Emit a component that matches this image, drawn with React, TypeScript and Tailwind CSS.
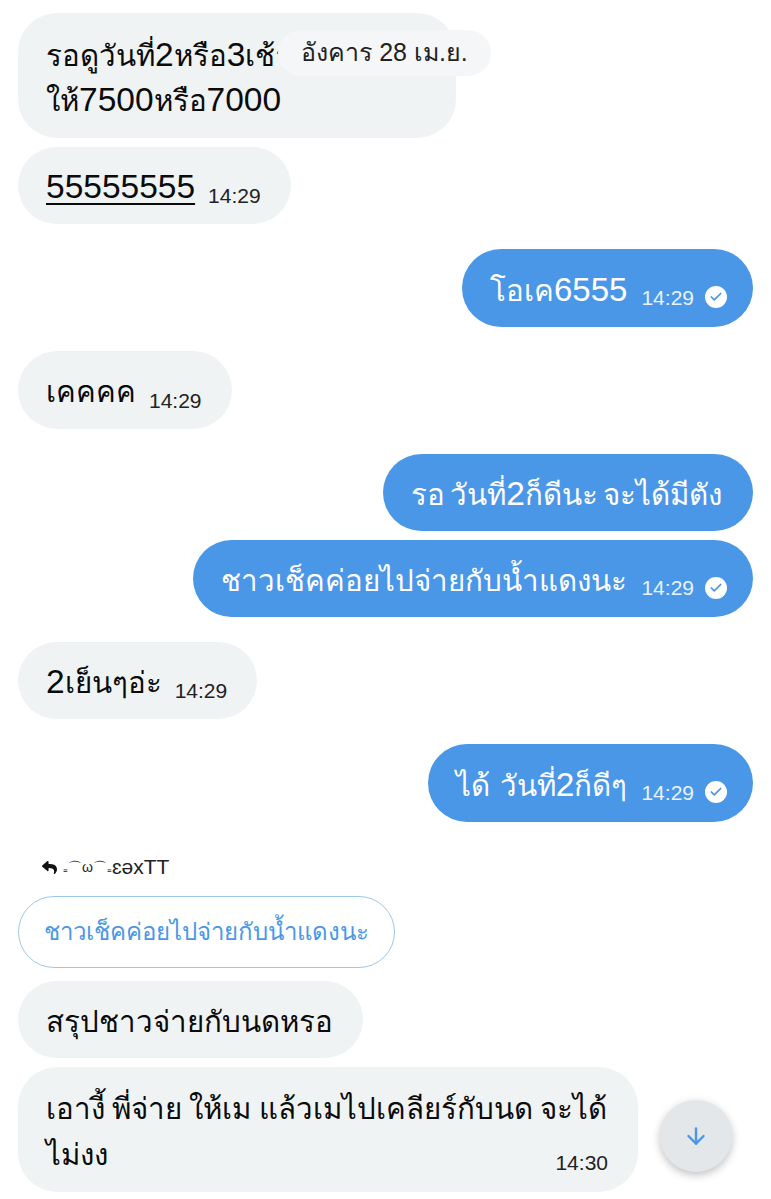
import type { ReactNode } from 'react';
import { ArrowDown, Check } from 'lucide-react';
import { FaReply } from 'react-icons/fa';

const msgFont = "text-[29.5px] leading-[46px] text-[#0b0b0b]";

function Num({ children }: { children: ReactNode }) {
  return <span className="text-[33.5px]">{children}</span>;
}

function Time({ text, light }: { text: string; light?: boolean }) {
  return (
    <span className={`block text-[21px] leading-none whitespace-nowrap ${light ? 'text-[#eaf3fd]' : 'text-[#222]'}`}>{text}</span>
  );
}

function Tick() {
  return (
    <span className="flex h-[22px] w-[22px] items-center justify-center rounded-full bg-white">
      <Check size={14} strokeWidth={3} className="text-[#4a97e8]" />
    </span>
  );
}

function Left({ children, time, h = 'h-[77px]' }: { children: ReactNode; time: string; h?: string }) {
  return (
    <div className={`flex ${h} w-fit items-center gap-[13px] rounded-[39px] bg-[#f0f3f4] pl-[28px] pr-[30px]`}>
      <span className={`${msgFont} mt-[4px] whitespace-nowrap`}>{children}</span>
      <span className="mt-[20px]"><Time text={time} /></span>
    </div>
  );
}

function Right({ children, time, h = 'h-[77px]', spacing = '' }: { children: ReactNode; time?: string; h?: string; spacing?: string }) {
  return (
    <div className={`ml-auto flex ${h} w-fit items-center gap-[14px] rounded-[39px] bg-[#4a97e8] pl-[28px] ${time ? 'pr-[26px]' : 'pr-[31px]'}`}>
      <span className={`mt-[4px] whitespace-nowrap text-[29.5px] leading-[46px] text-white ${spacing}`}>{children}</span>
      {time && (
        <span className="mt-[18px] flex items-center gap-[11px]">
          <Time text={time} light />
          <Tick />
        </span>
      )}
    </div>
  );
}

export default function App() {
  return (
    <div className="relative h-[1199px] w-[771px] overflow-hidden bg-white px-[18px] pt-[13px] font-['Liberation_Sans',sans-serif]">
      {/* date chip floats over the list */}
      <div className="absolute left-[278px] top-[30px] flex h-[46px] w-[213px] items-center justify-center rounded-[23px] bg-[#f5f6f7] text-[25px] text-[#222]">
        อังคาร 28 เม.ย.
      </div>

      <div className="flex flex-col">
        <div className={`h-[125px] w-[438px] rounded-[39px] bg-[#f0f3f4] px-[28px] pb-[15px] pt-[19px] ${msgFont}`}>
          <div className="whitespace-nowrap">รอดูวันที่<Num>2</Num>หรือ<Num>3</Num>เช้า</div>
          <div className="-mt-[2px] whitespace-nowrap">ให้<Num>7500</Num>หรือ<Num>7000</Num></div>
        </div>
        <div className="mt-[9px]">
          <Left time="14:29">
            <span className="underline decoration-2 underline-offset-[5px]"><Num>55555555</Num></span>
          </Left>
        </div>
        <div className="mt-[25px]">
          <Right time="14:29" h="h-[78px]">โอเค<span className="text-[33px]">6555</span></Right>
        </div>
        <div className="mt-[24px]">
          <Left time="14:29" h="h-[78px]">เคคคค</Left>
        </div>
        <div className="mt-[25px]">
          <Right spacing="[word-spacing:-3px]">รอ วันที่<Num>2</Num>ก็ดีนะ จะได้มีตัง</Right>
        </div>
        <div className="mt-[9px]">
          <Right time="14:29">ชาวเช็คค่อยไปจ่ายกับน้ำแดงนะ</Right>
        </div>
        <div className="mt-[25px]">
          <Left time="14:29"><Num>2</Num>เย็นๆอ่ะ</Left>
        </div>
        <div className="mt-[25px]">
          <Right time="14:29" h="h-[78px]" spacing="[word-spacing:2px]">ได้ วันที่<Num>2</Num>ก็ดีๆ</Right>
        </div>

        <div className="mt-[31px] flex h-[28px] items-center gap-[6px] pl-[24px] text-[21px] leading-[28px] text-[#222]">
          <FaReply size={15} className="text-[#111]" />
          <span className="flex items-center">
            <span className="text-[14px]">₌⌒ω⌒₌</span>
            <span>ɛəxTT</span>
          </span>
        </div>
        <div className="mt-[15px] flex h-[72px] w-[377px] items-center justify-center rounded-[36px] border border-[#9cc8ea] text-[24px] text-[#4a97e8]">
          ชาวเช็คค่อยไปจ่ายกับน้ำแดงนะ
        </div>
        <div className="mt-[13px] flex h-[77px] w-[345px] items-center rounded-[39px] bg-[#f0f3f4] px-[28px]">
          <span className={`${msgFont} mt-[4px] whitespace-nowrap`}>สรุปชาวจ่ายกับนดหรอ</span>
        </div>

        <div className="mt-[9px] flex items-start gap-[22px]">
          <div className={`relative h-[125px] w-[620px] rounded-[39px] bg-[#f0f3f4] px-[28px] pb-[15px] pt-[19px] ${msgFont}`}>
            <div className="whitespace-nowrap [word-spacing:-1px]">เอางี้ พี่จ่าย ให้เม แล้วเมไปเคลียร์กับนด จะได้</div>
            <div>ไม่งง</div>
            <span className="absolute bottom-[19px] right-[30px]"><Time text="14:30" /></span>
          </div>
          <button className="mt-[33px] flex h-[72px] w-[72px] items-center justify-center rounded-full bg-[#e4e7ea] shadow-[0_3px_8px_rgba(0,0,0,0.25)]">
            <ArrowDown size={26} strokeWidth={2.2} className="text-[#4a97e8]" />
          </button>
        </div>
      </div>
    </div>
  );
}
